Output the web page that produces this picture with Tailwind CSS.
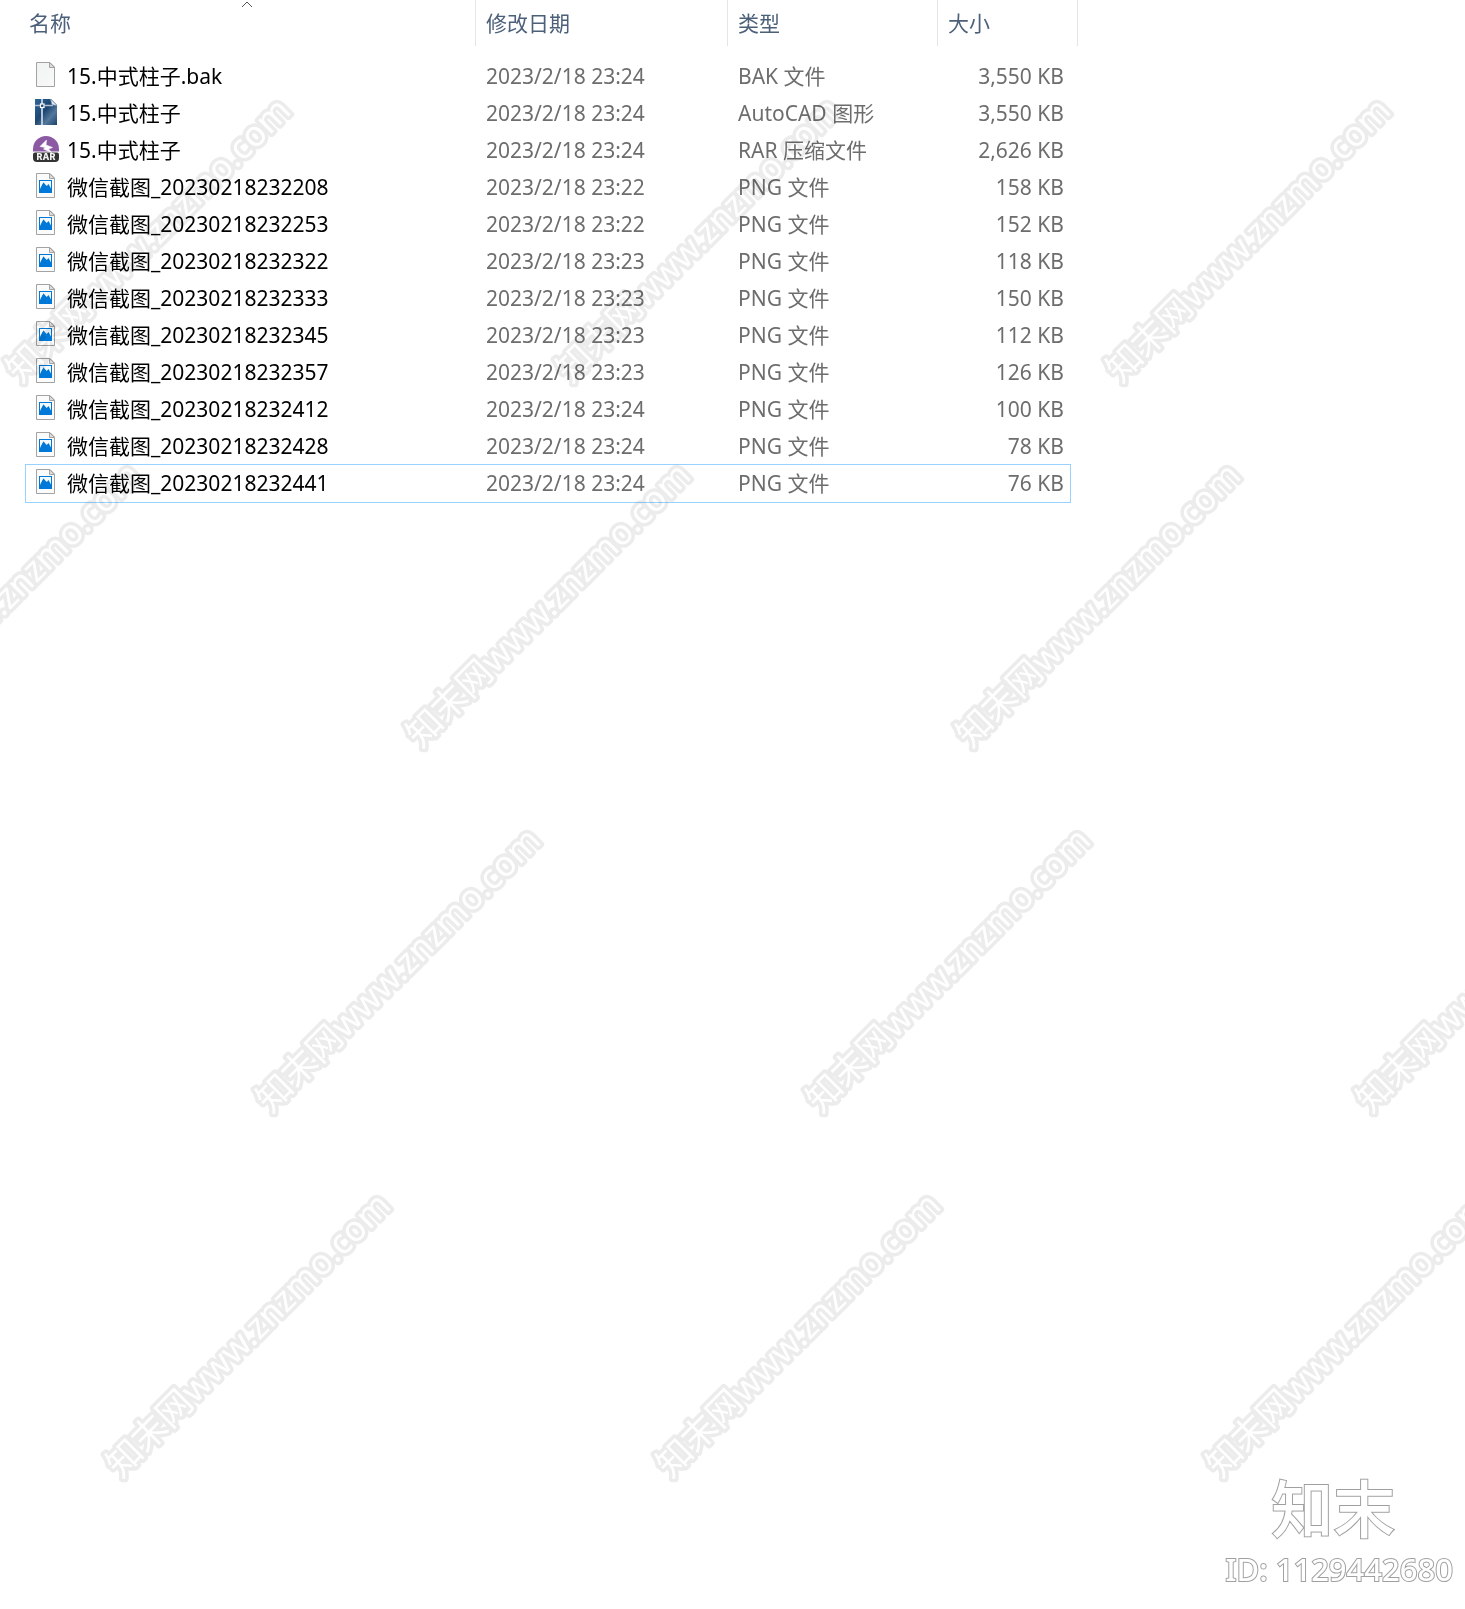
<!DOCTYPE html>
<html lang="zh-CN">
<head>
  <meta charset="UTF-8" />
  <meta name="viewport" content="width=device-width, initial-scale=1.0"/>
  <title>15.中式柱子</title>
  <script src="https://cdn.jsdelivr.net/npm/@tailwindcss/browser@4"></script>
</head>
<body class="bg-white font-['Noto_Sans','Noto_Sans_CJK_SC',sans-serif]">

  <!-- shared icon fills -->
  <svg class="absolute size-0" aria-hidden="true">
    <defs>
      <linearGradient id="paper" x1="0" y1="0" x2="1" y2="1">
        <stop offset="0" stop-color="#f1f2f2"/>
        <stop offset="1" stop-color="#f8f9f9"/>
      </linearGradient>
      <linearGradient id="cad" x1="0" y1="0" x2="1" y2="1">
        <stop offset="0" stop-color="#2f6699"/>
        <stop offset="0.45" stop-color="#1d4672"/>
        <stop offset="0.7" stop-color="#54789c"/>
        <stop offset="1" stop-color="#1b426c"/>
      </linearGradient>
    </defs>
  </svg>

  <main class="relative flex min-h-screen flex-col overflow-hidden">
    <div class="pl-[19px]">
      <table class="w-full max-w-[1059px] table-fixed border-separate border-spacing-0 text-[21px] leading-[37px]">
        <colgroup>
          <col class="w-[457px]">
          <col class="w-[252px]">
          <col class="w-[210px]">
          <col class="w-[140px]">
        </colgroup>
        <thead class="text-left text-[#4c607a]">
          <tr class="h-[46px]">
            <th class="relative border-r border-[#e5e5e5] pl-[10px] font-normal" aria-sort="ascending">
              名称
              <svg class="absolute left-1/2 top-0 h-2 w-3 -translate-x-1/2" viewBox="0 0 12 8" fill="none" stroke="#555"><path d="M1 7L6 2L11 7"/></svg>
            </th>
            <th class="border-r border-[#e5e5e5] pl-[10px] font-normal">修改日期</th>
            <th class="border-r border-[#e5e5e5] pl-[10px] font-normal">类型</th>
            <th class="border-r border-[#e5e5e5] pl-[10px] font-normal">大小</th>
          </tr>
        </thead>
        <tbody id="files" class="text-[#6d6d6d] before:block before:h-3"></tbody>
      </table>
    </div>

    <footer class="mt-auto self-end pr-3 pb-4 text-center text-white [paint-order:stroke_fill] [-webkit-text-stroke:2px_#a0a0a0]">
      <p class="mb-1 pr-3 text-[62px] leading-[64px] font-medium">知末</p>
      <p class="text-[31px] leading-[48px] font-medium">ID: 1129442680</p>
    </footer>

    <!-- watermark -->
    <svg id="marks" class="pointer-events-none absolute inset-0 h-full w-full mix-blend-multiply" aria-hidden="true" font-size="35" fill="#fff" stroke="#ececec" stroke-width="7" stroke-linejoin="round" paint-order="stroke"></svg>
  </main>

<script>
  const icons = {
    file: `
      <path d="M3.500 1.500H17l4.500 4.500V25.500H3.500Z" fill="url(#paper)" stroke="#a3a3a3"/>
      <path d="M16.500 1.500V6.500H21.500Z" fill="#dcdcdc" stroke="#a3a3a3"/>`,
    dwg: `
      <path d="M2 1H18L24 7V27H2Z" fill="url(#cad)"/>
      <path d="M17.500 1L24 7.500Q20 7 19 6.500Q18.500 5 17.500 1Z" fill="#e8eef5" stroke="#7c94ad" stroke-width=".6"/>
      <path d="M2 7.500H7.500M11.500 7.500H20" stroke="#aebfd1" stroke-width="1.400"/>
      <path d="M9 1V6M9 10V27" stroke="#c6d3e0" stroke-width="1.800"/>
      <rect x="7.500" y="6" width="3.500" height="3.500" fill="#1d4672" stroke="#fff" stroke-width="1.200"/>`,
    rar: `
      <path d="M0 16.500V14A13 13 0 0 1 26 14V16.500Z" fill="#8c5aa3"/>
      <path d="M2 17.500H24Q26 17.500 26 19.500V23Q26 27 22 27H4Q0 27 0 23V19.500Q0 17.500 2 17.500Z" fill="#333"/>
      <path d="M13.500 5L7 11.500L12.500 12.500L10.500 14L18.500 17.500L15.500 14L19.500 12.500L13 10Z" fill="#fff" stroke="#fff" stroke-width=".6" stroke-linejoin="round"/>
      <text x="13" y="25" text-anchor="middle" font-family="Inter, sans-serif" font-size="9" font-weight="800" fill="#f2f2f2">RAR</text>`,
    png: `
      <path d="M3.500 1.500H17l4.500 4.500V25.500H3.500Z" fill="#fbfbfb" stroke="#a3a3a3"/>
      <path d="M16.500 1.500V6.500H21.500Z" fill="#dcdcdc" stroke="#a3a3a3"/>
      <rect x="6" y="8" width="13" height="13" fill="#0078d7"/>
      <path d="M7 9H18V16.500L15.500 12L13.700 14L10.500 10.500L7 17Z" fill="#f4f9fd"/>
      <path d="M10.500 10.500L12.500 14L10 13L7 17Z" fill="#0078d7"/>`,
  };

  const files = [
    ['file', '15.中式柱子.bak', '2023/2/18 23:24', 'BAK 文件', '3,550 KB'],
    ['dwg', '15.中式柱子', '2023/2/18 23:24', 'AutoCAD 图形', '3,550 KB'],
    ['rar', '15.中式柱子', '2023/2/18 23:24', 'RAR 压缩文件', '2,626 KB'],
    ['png', '微信截图_20230218232208', '2023/2/18 23:22', 'PNG 文件', '158 KB'],
    ['png', '微信截图_20230218232253', '2023/2/18 23:22', 'PNG 文件', '152 KB'],
    ['png', '微信截图_20230218232322', '2023/2/18 23:23', 'PNG 文件', '118 KB'],
    ['png', '微信截图_20230218232333', '2023/2/18 23:23', 'PNG 文件', '150 KB'],
    ['png', '微信截图_20230218232345', '2023/2/18 23:23', 'PNG 文件', '112 KB'],
    ['png', '微信截图_20230218232357', '2023/2/18 23:23', 'PNG 文件', '126 KB'],
    ['png', '微信截图_20230218232412', '2023/2/18 23:24', 'PNG 文件', '100 KB'],
    ['png', '微信截图_20230218232428', '2023/2/18 23:24', 'PNG 文件', '78 KB'],
    ['png', '微信截图_20230218232441', '2023/2/18 23:24', 'PNG 文件', '76 KB'],
  ];
  const focused = 'relative after:pointer-events-none after:absolute after:-inset-y-px after:left-[6px] after:right-[7px] after:border after:border-[#99d1ff]';

  document.getElementById('files').innerHTML = files.map(([icon, name, date, type, size], i) => `
    <tr class="${i === files.length - 1 ? focused : ''}">
      <td class="p-0 pl-[14px] text-black">
        <div class="flex h-[37px] items-center gap-[7px]">
          <svg class="mb-1 size-[27px] shrink-0" viewBox="0 0 27 27">${icons[icon]}</svg>
          <span class="truncate">${name}</span>
        </div>
      </td>
      <td class="p-0 pl-[10px]">${date}</td>
      <td class="p-0 pl-[10px]">${type}</td>
      <td class="p-0 pr-[14px] text-right">${size}</td>
    </tr>`).join('');

  // each row of marks is shifted 150px left of the one above
  let marks = '';
  for (let row = 0; row < 4; row++) {
    for (let x = 21 - 150 * row; x < 1465; x += 550) {
      if (x < -200) continue;
      marks += `<text transform="translate(${x} ${384 + 365 * row}) rotate(-45)">知末网www.znzmo.com</text>`;
    }
  }
  document.getElementById('marks').innerHTML = marks;
</script>

</body>
</html>
